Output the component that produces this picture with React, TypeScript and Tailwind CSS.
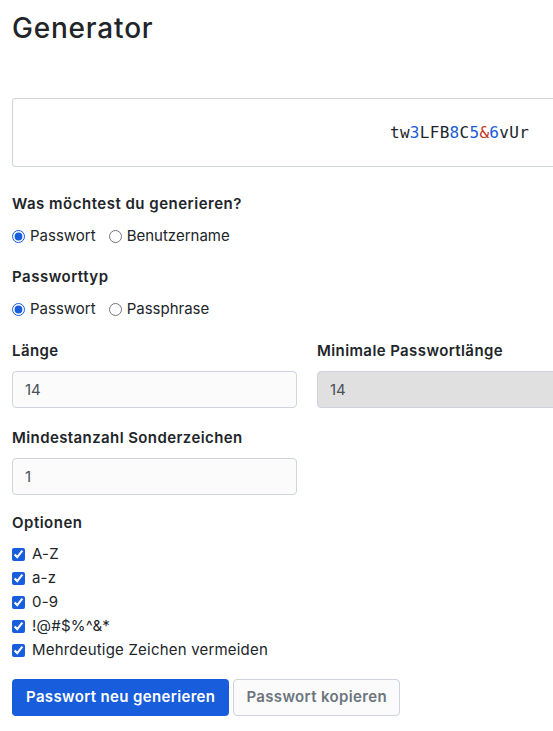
import React from 'react'

const pw: { c: string; k: 'l' | 'd' | 's' }[] = 'tw3LFB8C5&6vUr'.split('').map((c) => ({
  c,
  k: /[0-9]/.test(c) ? 'd' : /[a-zA-Z]/.test(c) ? 'l' : 's',
}))

const Radio = ({ name, label, checked }: { name: string; label: string; checked?: boolean }) => (
  <label className="flex items-center gap-[5px]">
    <input type="radio" name={name} defaultChecked={checked} className="m-0 h-[13px] w-[13px] accent-[#175ddc]" />
    <span>{label}</span>
  </label>
)

const Field = ({ label, value, disabled }: { label: string; value: string; disabled?: boolean }) => (
  <div className="flex flex-col">
    <span className="mb-[10px] font-semibold tracking-[0.4px] text-[#212529]">{label}</span>
    <input
      defaultValue={value}
      disabled={disabled}
      className={
        'h-[37px] rounded-[4px] border border-[#ced4da] px-[12px] text-[15px] text-[#495057] outline-none ' +
        (disabled ? 'bg-[#e0e0e0] text-[#6c757d]' : 'bg-[#fbfbfb]')
      }
    />
  </div>
)

export default function App() {
  return (
    <div className="h-[731px] w-[553px] overflow-hidden bg-white text-[15px] text-[#212529]" style={{ fontFamily: 'Inter, "Noto Sans", sans-serif' }}>
      <div className="w-[602px] pl-[12px]">
        <h1 className="pt-[11px] text-[28px] font-medium leading-[34px] tracking-[0.8px] text-[#212529]">Generator</h1>

        {/* password preview */}
        <div className="mt-[53px] flex h-[69px] w-[895px] items-center justify-center rounded-[3px] border border-[#ced4da] bg-white">
          <span className="text-[16px] tracking-[0.3px]" style={{ fontFamily: '"DejaVu Sans Mono", "Liberation Mono", monospace' }}>
            {pw.map((p, i) => (
              <span
                key={i}
                className={p.k === 'd' ? 'text-[#175ddc]' : p.k === 's' ? 'text-[#c83522]' : 'text-[#212529]'}
              >
                {p.c}
              </span>
            ))}
          </span>
        </div>

        <div className="mt-[27px] font-semibold leading-[20px] tracking-[0.5px]">Was möchtest du generieren?</div>
        <div className="mt-[12px] flex gap-[13px] leading-[20px]">
          <Radio name="type" label="Passwort" checked />
          <Radio name="type" label="Benutzername" />
        </div>

        <div className="mt-[21px] font-semibold leading-[20px] tracking-[0.5px]">Passworttyp</div>
        <div className="mt-[12px] flex gap-[13px] leading-[20px]">
          <Radio name="ptype" label="Passwort" checked />
          <Radio name="ptype" label="Passphrase" />
        </div>

        <div className="mt-[22px] grid grid-cols-2 gap-x-[20px] leading-[20px]">
          <Field label="Länge" value="14" />
          <Field label="Minimale Passwortlänge" value="14" disabled />
        </div>

        <div className="mt-[20px] grid grid-cols-2 gap-x-[20px] leading-[20px]">
          <Field label="Mindestanzahl Sonderzeichen" value="1" />
        </div>

        <div className="mt-[18px] font-semibold leading-[20px] tracking-[0.5px]">Optionen</div>
        <div className="mt-[11px] flex flex-col gap-[4px] leading-[20px]">
          {['A-Z', 'a-z', '0-9', '!@#$%^&*', 'Mehrdeutige Zeichen vermeiden'].map((o) => (
            <label key={o} className="flex items-center gap-[7px]">
              <input type="checkbox" defaultChecked className="m-0 h-[13px] w-[13px] accent-[#175ddc]" />
              <span className="tracking-[0.2px]">{o}</span>
            </label>
          ))}
        </div>

        <div className="mt-[19px] flex gap-[4px]">
          <button className="h-[37px] rounded-[4px] bg-[#175ddc] px-[14px] font-semibold tracking-[0.35px] text-white">
            Passwort neu generieren
          </button>
          <button className="h-[37px] rounded-[4px] border border-[#ced4da] bg-[#fbfbfb] px-[12px] font-semibold tracking-[0.35px] text-[#6c757d]">
            Passwort kopieren
          </button>
        </div>
      </div>
    </div>
  )
}
